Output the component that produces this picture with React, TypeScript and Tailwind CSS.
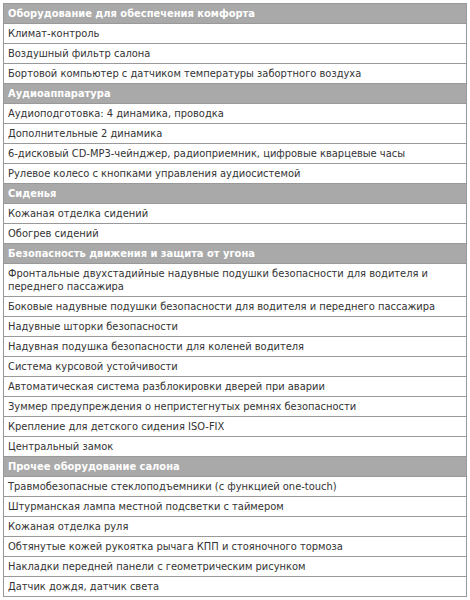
import { Fragment } from "react";

const sections: { title: string; items: string[] }[] = [
  {
    title: "Оборудование для обеспечения комфорта",
    items: [
      "Климат-контроль",
      "Воздушный фильтр салона",
      "Бортовой компьютер с датчиком температуры забортного воздуха",
    ],
  },
  {
    title: "Аудиоаппаратура",
    items: [
      "Аудиоподготовка: 4 динамика, проводка",
      "Дополнительные 2 динамика",
      "6-дисковый CD-MP3-чейнджер, радиоприемник, цифровые кварцевые часы",
      "Рулевое колесо с кнопками управления аудиосистемой",
    ],
  },
  {
    title: "Сиденья",
    items: ["Кожаная отделка сидений", "Обогрев сидений"],
  },
  {
    title: "Безопасность движения и защита от угона",
    items: [
      "Фронтальные двухстадийные надувные подушки безопасности для водителя и\nпереднего пассажира",
      "Боковые надувные подушки безопасности для водителя и переднего пассажира",
      "Надувные шторки безопасности",
      "Надувная подушка безопасности для коленей водителя",
      "Система курсовой устойчивости",
      "Автоматическая система разблокировки дверей при аварии",
      "Зуммер предупреждения о непристегнутых ремнях безопасности",
      "Крепление для детского сидения ISO-FIX",
      "Центральный замок",
    ],
  },
  {
    title: "Прочее оборудование салона",
    items: [
      "Травмобезопасные стеклоподъемники (с функцией one-touch)",
      "Штурманская лампа местной подсветки с таймером",
      "Кожаная отделка руля",
      "Обтянутые кожей рукоятка рычага КПП и стояночного тормоза",
      "Накладки передней панели с геометрическим рисунком",
      "Датчик дождя, датчик света",
    ],
  },
];

export default function App() {
  return (
    <div className="w-[470px] h-[600px] bg-white pt-[3px] pl-[3px]">
      <table
        className="w-[464px] border-collapse text-[11px] leading-[13px] text-[#333]"
        style={{ fontFamily: '"DejaVu Sans Condensed", "DejaVu Sans", sans-serif' }}
      >
        <tbody>
          {sections.map((s) => (
            <Fragment key={s.title}>
              <tr>
                <td className="border border-[#999] bg-[#a9a9a9] text-white font-bold h-[20px] px-[4px] py-0 align-middle">
                  {s.title}
                </td>
              </tr>
              {s.items.map((it) => (
                <tr key={it}>
                  <td
                    className={`border border-[#999] bg-white px-[4px] align-middle whitespace-pre-line ${
                      it.includes("\n") ? "h-[33px]" : "h-[20px]"
                    }`}
                  >
                    {it}
                  </td>
                </tr>
              ))}
            </Fragment>
          ))}
        </tbody>
      </table>
    </div>
  );
}
